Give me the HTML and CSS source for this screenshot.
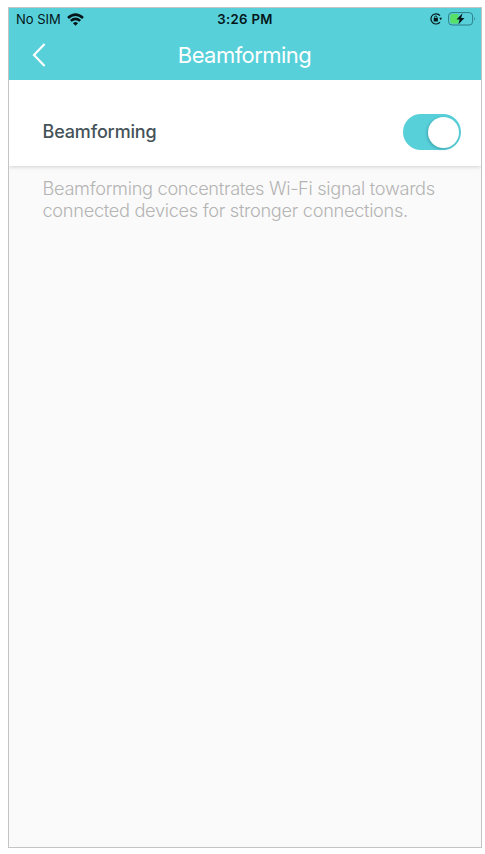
FILE: index.html
```html
<!DOCTYPE html>
<html lang="en">
<head>
<meta charset="utf-8">
<title>Beamforming</title>
<link rel="stylesheet" href="styles.css">
</head>
<body>
<main class="phone">
  <header class="header">
    <div class="status">
      <div class="carrier"><span>No SIM</span>
        <svg class="wifi" viewBox="0 0 17 13" width="17" height="13" fill="none" stroke="#041619" stroke-width="2.5"><path d="M1 5Q8.500-1.800 16 5M3.800 7.900Q8.500 3.800 13.200 7.900"/><path d="M6 10.200Q8.500 8 11 10.200L8.500 12.800Z" fill="#041619" stroke="none"/></svg>
      </div>
      <span class="time">3:26 PM</span>
      <div class="indicators">
        <svg width="12" height="12" viewBox="0 0 12 12" fill="none" stroke="#041619" stroke-width="1.200"><path d="M10 2.700A5.100 5.100 0 1 0 10 9.100"/><path d="M9.300 4.800h2.700l-1.300 2.500Z" fill="#041619" stroke="none"/><path d="M4.600 5.400V4.200a1.200 1.200 0 0 1 2.400 0v1.200" stroke-width=".9"/><rect x="3.700" y="5" width="4.200" height="3.500" rx=".5" fill="#041619" stroke="none"/></svg>
        <svg width="28" height="14" viewBox="0 0 28 14"><rect x=".6" y=".6" width="24" height="12.400" rx="3.400" fill="none" stroke="#2e7f88"/><path d="M4.200 2.100H10.500V11.500H4.200A2 2 0 0 1 2.200 9.500V4.100A2 2 0 0 1 4.200 2.100Z" fill="#58df65"/><path d="M26.300 4.800Q28 6.800 26.300 8.800Z" fill="#2e7f88"/><path d="M14.500 1.200L8.500 7.600H11.700L10.300 12.600L16.500 6.100H13.200Z" fill="#041619"/></svg>
      </div>
    </div>
    <div class="navbar">
      <svg class="back" width="14" height="24" viewBox="0 0 14 24" fill="none" stroke="#fff" stroke-width="2.200"><path d="M12.600 1L2 12L12.600 23"/></svg>
      <h1 class="title">Beamforming</h1>
    </div>
  </header>
  <section class="setting">
    <span class="label">Beamforming</span>
    <span class="toggle" role="switch" aria-checked="true" aria-label="Beamforming"><span class="knob"></span></span>
  </section>
  <p class="description">Beamforming concentrates Wi-Fi signal towards<br>connected devices for stronger connections.</p>
</main>
</body>
</html>
```
FILE: styles.css
```css
* { box-sizing: border-box; }
body { margin: 0; background: #fff; font-family: Inter, "Liberation Sans", sans-serif; }
.phone { width: 474px; height: 841px; margin: 7px 0 0 8px; border: 1px solid #c4c4c4; background: #fafafa; }
.header { height: 72px; background: #57d0da; }
.status { display: grid; grid-template-columns: 1fr auto 1fr; align-items: center; height: 22px; padding: 0 5px 0 7px; color: #041619; font-size: 13px; }
.carrier, .indicators { display: flex; align-items: center; gap: 6px; }
.indicators { justify-content: flex-end; }
.time { margin-right: 2px; font-size: 13.2px; font-weight: 600; letter-spacing: .35px; }
.navbar { display: grid; grid-template-columns: 1fr auto 1fr; align-items: center; height: 50px; padding: 0 24px 0 23px; color: #fff; }
.title { grid-column: 2; margin: 0; font-size: 22px; font-weight: 400; line-height: 28px; letter-spacing: -.55px; }
.setting { display: flex; align-items: center; justify-content: space-between; height: 86px; padding: 18px 20px 0 33.5px; background: #fff; box-shadow: 0 1px 4px rgba(0, 0, 0, .16); clip-path: inset(0 0 -6px 0); }
.label { padding-bottom: 1px; color: #455359; font-size: 18px; font-weight: 500; letter-spacing: -.15px; }
.toggle { display: flex; justify-content: flex-end; align-items: center; width: 58.5px; height: 36px; padding: 2px; border-radius: 18px; background: #57d0da; }
.knob { width: 31px; height: 31px; border-radius: 50%; background: #fff; box-shadow: -1px 1px 3px rgba(0, 60, 70, .3); }
.description { margin: 11px 0 0 33.5px; color: #b4b4b4; font-size: 18.2px; font-weight: 300; line-height: 22px; letter-spacing: -.3px; white-space: nowrap; }
```
